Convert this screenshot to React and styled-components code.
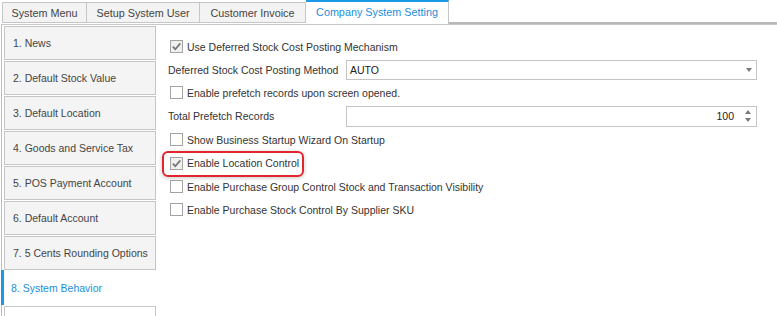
import React from 'react';
import styled, { createGlobalStyle } from 'styled-components';

const GlobalStyle = createGlobalStyle`
  html, body {
    margin: 0;
    padding: 0;
    background: #fff;
  }
  body {
    font-family: "Liberation Sans", Arial, sans-serif;
    font-size: 10.5px;
    color: #333;
    overflow: hidden;
  }
`;

const tabs = [
  { label: 'System Menu', width: 85 },
  { label: 'Setup System User', width: 113 },
  { label: 'Customer Invoice', width: 106 },
  { label: 'Company System Setting', width: 143, active: true },
];

const navItems = [
  '1. News',
  '2. Default Stock Value',
  '3. Default Location',
  '4. Goods and Service Tax',
  '5. POS Payment Account',
  '6. Default Account',
  '7. 5 Cents Rounding Options',
  '8. System Behavior',
];

const Page = styled.div`
  width: 777px;
  height: 316px;
  display: flex;
  flex-direction: column;
  overflow: hidden;
`;

const TabStrip = styled.div`
  display: flex;
  align-items: flex-end;
  height: 24px;
  padding-left: 2px;
  box-sizing: border-box;
`;

const Tab = styled.div`
  box-sizing: border-box;
  width: ${p => p.$width}px;
  height: ${p => (p.$active ? 24 : 21)}px;
  margin-bottom: ${p => (p.$active ? 0 : 1)}px;
  display: flex;
  align-items: center;
  justify-content: center;
  border: 1px solid #c6c6c6;
  border-left-width: ${p => (p.$first ? 1 : 0)}px;
  border-top: ${p => (p.$active ? '2px solid #1a9ae6' : '1px solid #c6c6c6')};
  border-bottom: ${p => (p.$active ? 'none' : '1px solid #c6c6c6')};
  background: ${p => (p.$active ? '#fff' : '#f3f3f3')};
  color: ${p => (p.$active ? '#1a8fdc' : '#444')};
  font-size: 10.8px;
  padding-bottom: ${p => (p.$active ? 2 : 0)}px;
`;

const TabFill = styled.div`
  flex: 1;
  align-self: stretch;
  border-bottom: 2px solid #b8b8b8;
`;

const Body = styled.div`
  flex: 1;
  display: flex;
  min-height: 0;
`;

const Nav = styled.div`
  margin-left: 1px;
  width: 155px;
  box-sizing: border-box;
  border-left: 1px solid #bdbdbd;
  border-top: 1px solid #c8c8c8;
  padding: 1px 0 0 2px;
  display: flex;
  flex-direction: column;
  gap: 1px;
  flex-shrink: 0;
`;

const NavItem = styled.div`
  box-sizing: border-box;
  height: ${p => (p.$active ? 35 : 34)}px;
  flex-shrink: 0;
  display: flex;
  align-items: center;
  font-size: 10.5px;
  white-space: nowrap;
  ${p =>
    p.$active
      ? `
    margin: -1px 0 0 -3px;
    border-left: 3px solid #1a9ae6;
    padding-left: 7px;
    background: #fff;
    color: #1a8fdc;
  `
      : `
    border: 1px solid #c6c6c6;
    padding-left: 8px;
    background: ${p.$blank ? '#fff' : '#f4f4f4'};
    color: #444;
  `}
`;

const Content = styled.div`
  flex: 1;
  border-top: 1px solid #c8c8c8;
  padding: 10px 20px 0 12px;
  display: flex;
  flex-direction: column;
`;

const Row = styled.div`
  position: relative;
  height: ${p => p.$h || 23}px;
  display: flex;
  align-items: center;
  flex-shrink: 0;
`;

const Box = styled.span`
  box-sizing: border-box;
  width: 13px;
  height: 13px;
  margin-left: 2px;
  margin-right: 4px;
  border: 1px solid #a3a3a3;
  background: ${p => (p.$checked ? '#f0f0f0' : '#fff')};
  display: inline-flex;
  align-items: center;
  justify-content: center;
  position: relative;
  z-index: 1;
`;

const CheckText = styled.span`
  position: relative;
  z-index: 1;
`;

const Label = styled.span`
  width: 178px;
  flex-shrink: 0;
`;

const Field = styled.div`
  box-sizing: border-box;
  flex: 1;
  height: ${p => p.$h}px;
  border: 1px solid #c4c4c4;
  display: flex;
  align-items: center;
  padding: 0 3px;
  color: #222;
`;

const FieldValue = styled.span`
  flex: 1;
  text-align: ${p => (p.$right ? 'right' : 'left')};
`;

const Arrow = styled.span`
  width: 0;
  height: 0;
  border-left: 3.5px solid transparent;
  border-right: 3.5px solid transparent;
  border-top: 4px solid #7a7a7a;
  margin: 1px 1px 0 0;
`;

const Spin = styled.div`
  width: 9px;
  margin-left: 9px;
  margin-right: 1px;
  display: flex;
  flex-direction: column;
  align-items: center;
  gap: 4px;
`;

const SpinUp = styled.span`
  width: 0;
  height: 0;
  border-left: 3.5px solid transparent;
  border-right: 3.5px solid transparent;
  border-bottom: 4px solid #7a7a7a;
`;

const SpinDown = styled(SpinUp)`
  border-bottom: none;
  border-top: 4px solid #7a7a7a;
`;

const Highlight = styled.div`
  position: absolute;
  left: -6px;
  top: 0;
  width: 142px;
  height: 26px;
  box-sizing: border-box;
  border: 2px solid #e1262d;
  border-radius: 6px;
  box-shadow: 0 1px 4px rgba(0, 0, 0, 0.22);
`;

const Check = ({ checked }) => (
  <Box $checked={checked}>
    {checked && (
      <svg width="11" height="11" viewBox="0 0 11 11">
        <path d="M1.8 5.6 L4.3 8.2 L9.3 2.4" fill="none" stroke="#767676" strokeWidth="1.7" />
      </svg>
    )}
  </Box>
);

const CheckRow = ({ checked, children, h, highlight }) => (
  <Row $h={h}>
    {highlight && <Highlight />}
    <Check checked={checked} />
    <CheckText>{children}</CheckText>
  </Row>
);

export default function App() {
  return (
    <Page>
      <GlobalStyle />
      <TabStrip>
        {tabs.map((t, i) => (
          <Tab key={t.label} $width={t.width} $active={t.active} $first={i === 0}>
            {t.label}
          </Tab>
        ))}
        <TabFill />
      </TabStrip>
      <Body>
        <Nav>
          {navItems.map((n, i) => (
            <NavItem key={n} $active={i === navItems.length - 1}>
              {n}
            </NavItem>
          ))}
          <NavItem $blank />
        </Nav>
        <Content>
          <CheckRow checked>Use Deferred Stock Cost Posting Mechanism</CheckRow>
          <Row>
            <Label>Deferred Stock Cost Posting Method</Label>
            <Field $h={20}>
              <FieldValue>AUTO</FieldValue>
              <Arrow />
            </Field>
          </Row>
          <CheckRow>Enable prefetch records upon screen opened.</CheckRow>
          <Row $h={24}>
            <Label>Total Prefetch Records</Label>
            <Field $h={21}>
              <FieldValue $right>100</FieldValue>
              <Spin>
                <SpinUp />
                <SpinDown />
              </Spin>
            </Field>
          </Row>
          <CheckRow>Show Business Startup Wizard On Startup</CheckRow>
          <CheckRow checked h={24} highlight>Enable Location Control</CheckRow>
          <CheckRow>Enable Purchase Group Control Stock and Transaction Visibility</CheckRow>
          <CheckRow>Enable Purchase Stock Control By Supplier SKU</CheckRow>
        </Content>
      </Body>
    </Page>
  );
}
